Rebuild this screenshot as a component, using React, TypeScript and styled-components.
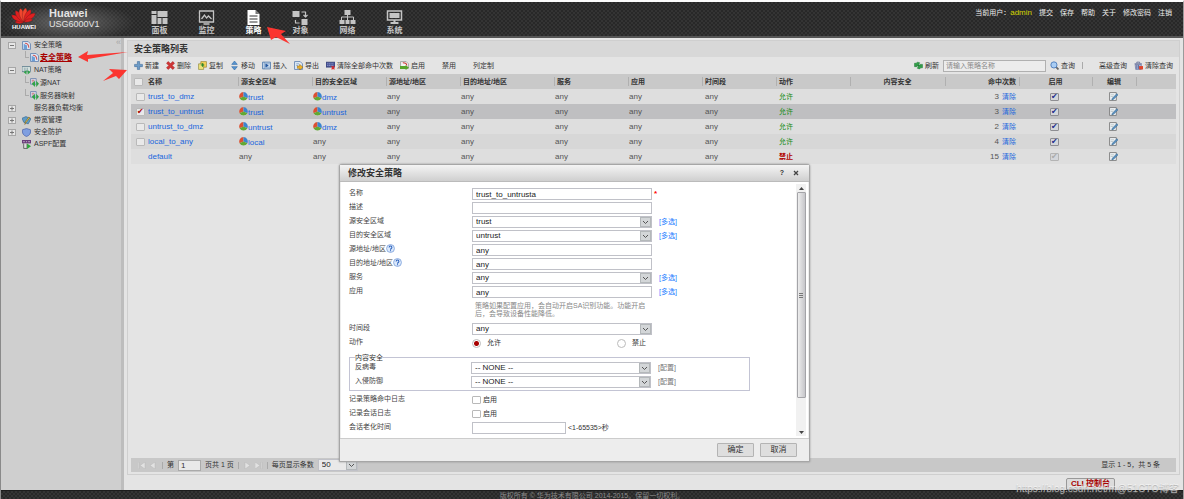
import React from "react";
import styled, { createGlobalStyle, css } from "styled-components";

const GlobalStyle = createGlobalStyle`
  * { box-sizing: border-box; }
  html, body { margin: 0; padding: 0; }
  body, input, select, button, table {
    font-family: "Liberation Sans", "Noto Sans CJK SC", Arial, sans-serif;
    font-size: 7px;
    line-height: 10px;
    color: #333;
  }
  a { text-decoration: none; color: inherit; }
  svg { display: block; flex: none; }
`;

/* ---------- frame ---------- */

const Page = styled.div`
  position: relative;
  display: flex;
  flex-direction: column;
  height: 100vh;
  overflow: hidden;
  border-top: 2px solid #fdfdfd;
  border-left: 1px solid #8a8a8a;
  border-right: 1px solid #9a9a9a;
  background: #e4e4e4;
`;

const mesh = css`
  background-color: #343434;
  background-image: radial-gradient(circle at 1px 1px, #282828 1px, transparent 1px),
    radial-gradient(circle at 3px 3px, #282828 1px, transparent 1px);
  background-size: 4px 4px;
`;

const Header = styled.header`
  ${mesh}
  display: flex;
  flex: none;
  height: 36px;
  border-bottom: 2px solid #555;
`;

const Brand = styled.div`
  display: flex;
  width: 135px;
  padding: 4px 0 0 10px;
  gap: 12px;
  background: radial-gradient(ellipse at 50% 60%, rgba(130, 130, 130, 0.7), rgba(90, 90, 90, 0) 70%);
`;

const LogoBox = styled.div`
  display: flex;
  flex-direction: column;
  align-items: center;
  width: 26px;
  font-size: 6px;
  line-height: 6px;
  font-weight: bold;
  color: #fff;
`;

const Product = styled.div`
  color: #e4e4e4;
  font-size: 9px;
  line-height: 11px;
  padding-top: 2px;
`;

const ProductName = styled.div`
  font-size: 11px;
  font-weight: bold;
`;

const Nav = styled.nav`
  display: flex;
  flex: 1;
`;

const NavItem = styled.a<{ $active?: boolean }>`
  display: flex;
  flex-direction: column;
  align-items: center;
  width: 47px;
  height: 34px;
  padding-top: 8px;
  gap: 1px;
  font-size: 8px;
  font-weight: bold;
  color: ${(p) => (p.$active ? "#fff" : "#c4c4c4")};
`;

const UserLinks = styled.div`
  display: flex;
  gap: 7px;
  padding: 6px 11px 0 0;
  color: #eee;
`;

const UserName = styled.span`
  color: #d4d400;
  font-size: 8px;
`;

const Body = styled.div`
  display: flex;
  flex: 1;
  min-height: 0;
`;

const Footer = styled.footer`
  ${mesh}
  flex: none;
  height: 9px;
  border-top: 1px solid #1c1c1c;
  overflow: hidden;
  text-align: center;
  color: #8c8c8c;
`;

/* ---------- tree ---------- */

const Sidebar = styled.aside`
  position: relative;
  flex: none;
  width: 123px;
  padding: 1px 0 0 7px;
  background: #cfcfcf;
  border-right: 3px solid #bdbdbd;
`;

const TreeRow = styled.div<{ $child?: boolean }>`
  display: flex;
  align-items: center;
  gap: ${(p) => (p.$child ? 1 : 0)}px;
  height: ${(p) => (p.$child ? 13 : 12)}px;
  padding-left: ${(p) => (p.$child ? 17 : 0)}px;
`;

const Toggle = styled.button`
  display: flex;
  align-items: center;
  justify-content: center;
  width: 8px;
  height: 7px;
  padding: 0;
  border: 1px solid #a6a6a6;
  background: #e6e6e6;
`;

const ToggleGap = styled.span`
  width: 8px;
`;

const TreeIcon = styled.span`
  width: 9px;
  margin: 0 3px 0 6px;
`;

const Branch = styled.span`
  width: 4px;
  height: 7px;
  margin-bottom: 6px;
  border-left: 1px solid #aaa;
  border-bottom: 1px solid #aaa;
`;

const TreeLink = styled.a<{ $active?: boolean }>`
  font-size: ${(p) => (p.$active ? 8 : 7)}px;
  ${(p) => p.$active && "color:#a80000;font-weight:bold;text-decoration:underline;"}
`;

const Collapse = styled.button`
  position: absolute;
  top: -1px;
  right: 0;
  padding: 0;
  border: 0;
  background: none;
  color: #a6a6a6;
  font-size: 9px;
`;

/* ---------- main panel ---------- */

const Main = styled.main`
  display: flex;
  flex: 1;
  flex-direction: column;
  min-width: 0;
  padding: 2px 3px 0 3px;
`;

const Panel = styled.section`
  display: flex;
  flex: 1;
  flex-direction: column;
  min-height: 0;
  border: 1px solid #cfcfcf;
  padding: 0 3px 2px;
`;

const PanelTitle = styled.h1`
  flex: none;
  height: 16px;
  margin: 0 -3px;
  padding: 0 6px;
  background: #d8d8d8;
  font-size: 9px;
  line-height: 16px;
  font-weight: bold;
`;

const Toolbar = styled.div`
  display: flex;
  flex: none;
  align-items: center;
  height: 17px;
  padding: 0 3px;
`;

const ToolButton = styled.button<{ $wide?: boolean }>`
  display: flex;
  align-items: center;
  gap: 2px;
  margin: 0 ${(p) => (p.$wide ? 17 : 7)}px 0 0;
  padding: 0;
  border: 0;
  background: none;
  white-space: nowrap;
  &:last-child { margin-right: 0; }
`;

const Push = styled.span`
  flex: 1;
`;

const SearchBox = styled.input`
  width: 103px;
  height: 12px;
  margin: 0 4px 0 -3px;
  padding: 0 2px;
  border: 1px solid #b0b0b0;
  background: #ececec;
  &::placeholder { color: #888; }
`;

const Bar = styled.span<{ $space?: number }>`
  width: 1px;
  height: 7px;
  margin: 0 ${(p) => p.$space ?? 0}px 0 0;
  background: #aaa;
`;

const Table = styled.table`
  width: 100%;
  flex: none;
  table-layout: fixed;
  border-collapse: collapse;
  white-space: nowrap;
`;

type Align = "left" | "center" | "right";

const Th = styled.th<{ $align?: Align; $bar?: boolean }>`
  height: 15px;
  padding: 0 3px 0 2px;
  background: #c9c9c9
    ${(p) => (p.$bar ? "linear-gradient(#b0b0b0, #b0b0b0) left center / 1px 9px no-repeat" : "")};
  text-align: ${(p) => p.$align ?? "left"};
  padding-left: ${(p) => (p.$bar ? 3 : 2)}px;
`;

const Td = styled.td<{ $align?: Align; $pad?: number }>`
  height: 15px;
  padding: 0 3px 0 ${(p) => p.$pad ?? 1}px;
  font-size: 8px;
  color: #555;
  text-align: ${(p) => p.$align ?? "left"};
`;

const Tr = styled.tr<{ $tone: string }>`
  background: ${(p) => p.$tone};
`;

const Zone = styled.span`
  display: flex;
  align-items: center;
`;

const Link = styled.a<{ $low?: boolean }>`
  color: #1a66dd;
  font-size: 8px;
  ${(p) => p.$low && "padding-top:3px;"}
`;

const SmallLink = styled(Link)`
  font-size: 7px;
  margin-left: 3px;
`;

const Verdict = styled.span<{ $deny?: boolean }>`
  font-size: 7px;
  font-weight: ${(p) => (p.$deny ? "bold" : "normal")};
  color: ${(p) => (p.$deny ? "#b00000" : "#128a12")};
`;

const Tick = styled.input<{ $color?: string; $fill?: string }>`
  appearance: none;
  display: block;
  flex: none;
  width: 9px;
  height: 8px;
  margin: 0;
  border: 1px solid #b9b9b9;
  border-radius: 1px;
  background: ${(p) => p.$fill ?? "#e9e9e9"};
  &:checked::after {
    content: "✔";
    display: block;
    font: 8px/6px "DejaVu Sans", sans-serif;
    color: ${(p) => p.$color ?? "#a80000"};
  }
`;

const EnableTick = styled(Tick)`
  border-color: #8e8e92;
  background: #d4d6da;
  &:disabled { border-color: #b4b4b4; }
`;

const Middle = styled.span`
  display: flex;
  justify-content: center;
`;

const IconButton = styled.button`
  padding: 0;
  border: 0;
  background: none;
`;

const Pager = styled.div`
  display: flex;
  flex: none;
  align-items: center;
  gap: 4px;
  height: 14px;
  padding: 0 16px 0 7px;
  background: #c8c8c8;
`;

const PageInput = styled.input`
  width: 23px;
  height: 11px;
  padding: 0 2px;
  border: 1px solid #aaa;
  background: #e9e9e9;
  font-size: 8px;
`;

const PageArrow = styled.button`
  width: 8px;
  padding: 0;
  border: 0;
  background: none;
`;

const Dock = styled.div`
  display: flex;
  flex: none;
  justify-content: flex-end;
  height: 15px;
  padding: 3px 65px 0 0;
`;

const CliButton = styled.button`
  width: 49px;
  height: 12px;
  padding: 0;
  border: 1px solid #999;
  border-radius: 2px 2px 0 0;
  background: #dcdcdc;
  color: #a80000;
  font-size: 8px;
  font-weight: bold;
`;

/* ---------- dialog ---------- */

const Dialog = styled.section`
  position: absolute;
  left: 338px;
  top: 162px;
  width: 471px;
  border: 1px solid #a6a6a6;
  border-radius: 3px 3px 0 0;
  background: #ededed;
  box-shadow: 0 0 2px #888;
`;

const DialogHead = styled.div`
  display: flex;
  align-items: center;
  height: 17px;
  padding: 0 10px 0 8px;
  gap: 9px;
  border-bottom: 1px solid #bbb;
  background: linear-gradient(#f4f4f4, #cfcfcf);
`;

const DialogTitle = styled.h2`
  flex: 1;
  margin: 0;
  font-size: 9px;
  line-height: 12px;
`;

const DialogMain = styled.div`
  display: flex;
  margin: 0 1px;
  background: #fff;
`;

const Form = styled.form`
  flex: 1;
  height: 256px;
  padding: 5px 0 0 8px;
`;

const Row = styled.div`
  display: flex;
  align-items: center;
  height: 14px;
`;

const Label = styled.label<{ $inset?: boolean }>`
  display: flex;
  align-items: center;
  width: ${(p) => (p.$inset ? 116 : 123)}px;
  padding-bottom: 3px;
  color: #444;
`;

const field = css`
  height: 12px;
  padding: 0 3px;
  border: 1px solid #c0c1c8;
  border-radius: 0;
  background: #fff;
  font-size: 8px;
  color: #222;
`;

const Field = styled.input<{ $short?: boolean }>`
  ${field}
  width: ${(p) => (p.$short ? 94 : 180)}px;
`;

const SelectWrap = styled.span<{ $w: number }>`
  position: relative;
  display: block;
  width: ${(p) => p.$w}px;
  height: 12px;
`;

const SelectBox = styled.select<{ $gray?: boolean }>`
  ${field}
  display: block;
  appearance: none;
  width: 100%;
  background: ${(p) => (p.$gray ? "#e9e9e9" : "#fff")};
`;

const SelectArrow = styled.span`
  position: absolute;
  top: 1px;
  right: 1px;
  display: flex;
  align-items: center;
  justify-content: center;
  width: 11px;
  height: 10px;
  border: 1px solid #b4b8ba;
  background: #d3d6d8;
  pointer-events: none;
`;

const FieldLink = styled.a<{ $off?: boolean }>`
  margin-left: 7px;
  color: ${(p) => (p.$off ? "#777" : "#1a7cff")};
`;

const Required = styled.span`
  margin-left: 2px;
  color: #f00;
  font-size: 8px;
  font-weight: bold;
`;

const Hint = styled.p`
  width: 183px;
  height: 23px;
  margin: 0 0 0 123px;
  padding: 3px 0 0 3px;
  line-height: 8px;
  color: #888;
`;

const Choice = styled.label<{ $w?: number }>`
  display: flex;
  align-items: center;
  gap: 6px;
  width: ${(p) => p.$w ?? 40}px;
`;

const Radio = styled.input`
  appearance: none;
  width: 9px;
  height: 9px;
  margin: 0;
  border: 1px solid #bbb;
  border-radius: 50%;
  background: #fff;
  &:checked { background: radial-gradient(circle, #a80000 0 2px, #fff 3px); }
`;

const CheckLabel = styled.label`
  display: flex;
  align-items: center;
  gap: 2px;
`;

const Group = styled.fieldset`
  width: 401px;
  min-width: 0;
  margin: 4px 0 2px;
  padding: 0 0 1px 5px;
  border: 1px solid #c3c4d4;
`;

const Legend = styled.legend`
  padding: 0;
  line-height: 7px;
`;

const ScrollTrack = styled.div`
  display: flex;
  flex-direction: column;
  align-items: center;
  width: 10px;
  margin: 2px 2px 2px 0;
  background: #f1f1f1;
`;

const ScrollThumb = styled.div`
  display: flex;
  align-items: center;
  justify-content: center;
  width: 9px;
  height: 206px;
  border: 1px solid #a4a4a8;
  border-radius: 1px;
  background: linear-gradient(90deg, #ededed, #c6c6ca);
`;

const ScrollEnd = styled.div<{ $last?: boolean }>`
  display: flex;
  align-items: center;
  height: 8px;
  ${(p) => p.$last && "margin-top:auto;"}
`;

const DialogFoot = styled.div`
  display: flex;
  align-items: center;
  justify-content: flex-end;
  gap: 6px;
  height: 23px;
  padding-right: 12px;
  border-top: 1px solid #ccc;
`;

const FootButton = styled.button`
  width: 37px;
  height: 14px;
  padding: 0;
  border: 1px solid #b4b4b4;
  border-radius: 1px;
  background: #dedede;
  font-size: 8px;
`;

/* ---------- overlays ---------- */

const Marks = styled.svg`
  position: absolute;
  left: -1px;
  top: -2px;
  pointer-events: none;
`;

const Watermark = styled.div`
  position: absolute;
  right: 4px;
  bottom: 4px;
  display: flex;
  font-size: 10px;
  line-height: 12px;
  color: rgba(255, 255, 255, 0.6);
  text-shadow: 0 1px 1px rgba(110, 110, 110, 0.5);
  pointer-events: none;
`;

/* ---------- drawings ---------- */

const Logo = () => (
  <svg width="26" height="18" viewBox="0 0 26 18">
    {[-82, -57, -33, -11, 11, 33, 57, 82].map((a, i) => (
      <path
        key={a}
        d={Math.abs(a) > 80 ? "M13 16C10 13 10 9 12 7C14 9 14 13 13 16Z" : "M13 16C9 11 9 4 12 2C15 4 15 11 13 16Z"}
        transform={`rotate(${a} 13 16)`}
        fill={i === 3 || i === 4 ? "#f0452e" : "#df2020"}
        stroke="#5a1a1a"
        strokeWidth="0.3"
      />
    ))}
  </svg>
);

const navArt: Record<string, React.ReactNode> = {
  panel: <path d="M0 1h5v3H0zM0 5h5v9H0zM6 1h10v6H6zM6 8h4v6H6zM11 8h5v6h-5z" />,
  monitor: (
    <g fill="none" stroke="currentColor" strokeWidth="1.3">
      <path d="M1 1h14v11H1zM5 14h6M3 9l3-4 2 3 2-2 3 3" />
    </g>
  ),
  policy: (
    <>
      <path d="M2 0h8l4 4v11H2z" />
      <path d="M4 6h8M4 9h8M4 12h8" stroke="#333" strokeWidth="1" />
      <path d="M10 0l4 4h-4z" fill="#777" />
    </>
  ),
  object: (
    <>
      <path d="M0 1h7v6H0zM9 9h6v6H9z" />
      <path d="M9 2h4v4M11 5l2 2 2-2M7 13H3v-3" fill="none" stroke="currentColor" strokeWidth="1.2" />
    </>
  ),
  network: (
    <>
      <path d="M5 0h6v5H5zM0 10h5v4H0zM6 10h4v4H6zM11 10h5v4h-5z" />
      <path d="M8 5v5M2 10V7h12v3" fill="none" stroke="currentColor" />
    </>
  ),
  system: (
    <>
      <path d="M1 1h14v9H1z" fill="none" stroke="currentColor" strokeWidth="1.5" />
      <path d="M3 3h10v5H3zM7 10h2v2H7zM4 12h8v2H4z" />
    </>
  ),
};

const NavIcon = ({ name }: { name: string }) => (
  <svg width="17" height="15" viewBox="0 0 16 15" fill="currentColor">
    {navArt[name]}
  </svg>
);

const sheet = <path d="M1 1h10l4 4v10H1z" fill="#e3edf9" stroke="#5c7fae" strokeWidth="1.5" />;

const art: Record<string, React.ReactNode> = {
  add: <path d="M6 1h4v5h5v4h-5v5H6v-5H1V6h5z" fill="#6d9cc8" stroke="#3b6a9a" />,
  remove: <path d="M4 1l4 4 4-4 3 3-4 4 4 4-3 3-4-4-4 4-3-3 4-4-4-4z" fill="#cf3636" stroke="#a11" />,
  copy: (
    <>
      <path d="M5 1h10v10H5z" fill="#f3d25a" stroke="#8a7420" />
      <path d="M1 5h9v10H1z" fill="#eee27c" stroke="#7e7a26" />
      <path d="M5 7h6M8 4v6" stroke="#2b8a2b" strokeWidth="2" />
    </>
  ),
  move: <path d="M8 0l5 6H3zM8 16l5-6H3z" fill="#5793cf" stroke="#2d68a6" />,
  insert: (
    <>
      <path d="M1 2h14v12H1z" fill="#d8e6f5" stroke="#4a76a8" strokeWidth="1.5" />
      <path d="M4 2v12M7 5h7M7 11h7" stroke="#4a76a8" />
      <path d="M6 4l6 4-6 4z" fill="#2458a0" />
    </>
  ),
  export: (
    <>
      {sheet}
      <path d="M4 5h5M4 8h3" stroke="#4a76a8" />
      <path d="M6 9h4V6l6 5-6 5v-3H6z" fill="#f1b52c" stroke="#96690c" />
    </>
  ),
  wipe: (
    <>
      <path d="M0 2h16v9H0z" fill="#4a5596" stroke="#2a3468" />
      <path d="M2 5h12M2 8h12" stroke="#bcc5f0" strokeDasharray="2 1" />
      <path d="M10 9l5 6M15 9l-5 6" stroke="#d22" strokeWidth="2" />
    </>
  ),
  enable: (
    <>
      <path d="M1 1h10l4 4v8H1z" fill="#f4f4f4" stroke="#777" />
      <path d="M5 3c5 0 7 2 7 5" fill="none" stroke="#c33" strokeWidth="2" />
      <path d="M0 9h10v-2l6 5-6 4v-2H0z" fill="#58a52c" />
    </>
  ),
  refresh: (
    <path
      d="M1 10V4h3l2-2 4 1-2 4v2H6L5 7v3zM15 6v6h-3l-2 2-4-1 2-4V7h2l1 2V6z"
      fill="#33a04a"
      stroke="#1c7a33"
    />
  ),
  search: (
    <>
      <path d="M10 10l5 5" stroke="#666" strokeWidth="3" />
      <circle cx="7" cy="7" r="5.5" fill="#a9cdf4" stroke="#4576b5" strokeWidth="1.5" />
    </>
  ),
  clear: (
    <>
      <path d="M2 6h11v9H3z" fill="#a8b4da" stroke="#5b6693" />
      <path d="M1 5h13M5 4V2h5v2M5 7v7M8 7v7" fill="none" stroke="#5b6693" strokeWidth="1.5" />
      <path d="M9 9h7v6H9z" fill="#e0452c" />
    </>
  ),
  policy: (
    <>
      {sheet}
      <path d="M5 4c5 0 7 3 7 8" fill="none" stroke="#cf5a5a" strokeWidth="2" />
      <path d="M3 5l6 3v6H3z" fill="#6d9fd6" />
    </>
  ),
  nat: (
    <>
      <path d="M0 1h15v9H0z" fill="#dfe9e4" stroke="#5b7c8c" strokeWidth="1.5" />
      <path d="M4 3v6M7 3v6M10 3v6" stroke="#5b7c8c" />
      <path d="M8 7l-5 4 5 4zM10 7l5 4-5 4z" fill="#30a248" />
    </>
  ),
  natChild: (
    <>
      <path d="M1 1h10v10H1z" fill="#dbe4f3" stroke="#6c83ad" strokeWidth="1.5" />
      <path d="M3 4h5M3 7h4" stroke="#c25f5f" strokeWidth="1.5" />
      <path d="M9 5l-6 5 6 6zM11 5l5 5-5 6z" fill="#30a248" />
    </>
  ),
  bandwidth: (
    <>
      <path d="M0 4l7-3 9 4-5 9-8-3z" fill="#5d9cc9" stroke="#2e5f88" />
      <path d="M14 3L7 12l-2 3 1-5 6-8z" fill="#f0cd4f" stroke="#73571a" />
    </>
  ),
  shield: <path d="M8 1l7 2c1 6-1 10-7 12C2 13 0 9 1 3z" fill="#7f9fe0" stroke="#4a62a8" strokeWidth="1.3" />,
  aspf: (
    <>
      <path d="M0 0h16v6H0z" fill="#6a3d7a" />
      <path d="M2 3h3M7 3h2M11 3h3" stroke="#fff" />
      <path d="M3 6v9h6V7" fill="#ddd" stroke="#555" strokeWidth="1.5" />
      <path d="M9 6l7 5-7 5z" fill="#2fa53a" />
    </>
  ),
  pie: (
    <>
      <circle cx="8" cy="8" r="7.5" fill="#ddd" />
      <path d="M8 8V0A8 8 0 0 0 1 11z" fill="#dc5032" />
      <path d="M8 8V0a8 8 0 0 1 7 11z" fill="#3c84cf" />
      <path d="M8 8l7 3a8 8 0 0 1-14 0z" fill="#62a833" />
    </>
  ),
  edit: (
    <>
      <path d="M1 1h12v14H1z" fill="#f0f3f6" stroke="#777" strokeWidth="1.5" />
      <path d="M3 5h6M3 8h4" stroke="#9aa" />
      <path d="M14 3l2 2-8 8-3 1 1-3z" fill="#5a93c4" stroke="#2e5f88" />
    </>
  ),
  help: (
    <>
      <circle cx="8" cy="8" r="7" fill="#dce9fb" stroke="#7fa3dc" strokeWidth="1.5" />
      <path d="M5.5 6c0-3 5-3 5 0 0 2-2.500 2-2.500 4M8 11v2" fill="none" stroke="#2c62bd" strokeWidth="1.8" />
    </>
  ),
};

const Icon = ({ name, size = 9 }: { name: string; size?: number }) => (
  <svg width={size} height={size} viewBox="0 0 16 16">
    {art[name]}
  </svg>
);

const Chevron = () => (
  <svg width="7" height="5" viewBox="0 0 7 5" fill="none" stroke="#555">
    <path d="M1 1l2.500 2.500L6 1" />
  </svg>
);

const PagerArt = ({ d }: { d: string }) => (
  <svg width="8" height="7" viewBox="0 0 8 7" fill="#e2e2e2" stroke="#b4b4b4" strokeWidth="0.4">
    <path d={d} />
  </svg>
);

/* ---------- data ---------- */

const navItems = [
  ["panel", "面板"],
  ["monitor", "监控"],
  ["policy", "策略"],
  ["object", "对象"],
  ["network", "网络"],
  ["system", "系统"],
];

const tree = [
  { t: "安全策略", icon: "policy", open: true },
  { t: "安全策略", icon: "policy", child: true, active: true },
  { t: "NAT策略", icon: "nat", open: true },
  { t: "源NAT", icon: "natChild", child: true },
  { t: "服务器映射", icon: "natChild", child: true },
  { t: "服务器负载均衡", open: false },
  { t: "带宽管理", icon: "bandwidth", open: false },
  { t: "安全防护", icon: "shield", open: false },
  { t: "ASPF配置", icon: "aspf" },
];

const tools = [
  ["add", "新建"],
  ["remove", "删除"],
  ["copy", "复制"],
  ["move", "移动"],
  ["insert", "插入"],
  ["export", "导出"],
  ["wipe", "清除全部命中次数"],
  ["enable", "启用"],
  ["", "禁用"],
  ["", "列定制"],
];

const widths = [15, 92, 74, 74, 74, 94, 74, 74, 74, 74, 95, 74, 73, 44];

const heads: [string, Align?][] = [
  ["源安全区域"],
  ["目的安全区域"],
  ["源地址/地区"],
  ["目的地址/地区"],
  ["服务"],
  ["应用"],
  ["时间段"],
  ["动作"],
  ["内容安全", "center"],
  ["命中次数", "right"],
  ["启用", "center"],
  ["编辑", "center"],
];

const policies = [
  { name: "trust_to_dmz", src: "trust", dst: "dmz", hits: 3, tone: "#dedede" },
  { name: "trust_to_untrust", src: "trust", dst: "untrust", hits: 3, tone: "#bfbfc1", picked: true },
  { name: "untrust_to_dmz", src: "untrust", dst: "dmz", hits: 2, tone: "#dedede" },
  { name: "local_to_any", src: "local", dst: "any", hits: 4, tone: "#d7d7d7" },
  { name: "default", src: "any", dst: "any", hits: 15, tone: "#dedede", fixed: true },
];

const ZoneCell = ({ zone }: { zone: string }) =>
  zone === "any" ? (
    <>any</>
  ) : (
    <Zone>
      <Icon name="pie" />
      <Link href="#" $low>{zone}</Link>
    </Zone>
  );

const Dropdown = ({ id, value, w = 180, gray }: { id: string; value: string; w?: number; gray?: boolean }) => (
  <SelectWrap $w={w}>
    <SelectBox id={id} defaultValue={value} $gray={gray}>
      <option>{value}</option>
    </SelectBox>
    <SelectArrow><Chevron /></SelectArrow>
  </SelectWrap>
);

const formRows = [
  { id: "name", label: "名称", value: "trust_to_untrusta", required: true },
  { id: "desc", label: "描述", value: "" },
  { id: "src", label: "源安全区域", value: "trust", select: true, multi: true },
  { id: "dst", label: "目的安全区域", value: "untrust", select: true, multi: true },
  { id: "srcAddr", label: "源地址/地区", value: "any", help: true },
  { id: "dstAddr", label: "目的地址/地区", value: "any", help: true },
  { id: "service", label: "服务", value: "any", select: true, multi: true },
  { id: "app", label: "应用", value: "any", multi: true },
];

const EditDialog = () => (
  <Dialog role="dialog" aria-labelledby="dialog-title">
    <DialogHead>
      <DialogTitle id="dialog-title">修改安全策略</DialogTitle>
      <IconButton aria-label="help"><b>?</b></IconButton>
      <IconButton aria-label="close">
        <svg width="6" height="6" viewBox="0 0 6 6" stroke="#444" strokeWidth="1.3">
          <path d="M1 1l4 4M5 1L1 5" />
        </svg>
      </IconButton>
    </DialogHead>
    <DialogMain>
      <Form>
        {formRows.map((r) => (
          <Row key={r.id}>
            <Label htmlFor={r.id}>
              {r.label}
              {r.help && <Icon name="help" />}
            </Label>
            {r.select ? <Dropdown id={r.id} value={r.value} /> : <Field id={r.id} defaultValue={r.value} />}
            {r.required && <Required>*</Required>}
            {r.multi && <FieldLink href="#">[多选]</FieldLink>}
          </Row>
        ))}
        <Hint>策略如果配置应用，会自动开启SA识别功能。功能开启后，会导致设备性能降低。</Hint>
        <Row>
          <Label htmlFor="time">时间段</Label>
          <Dropdown id="time" value="any" />
        </Row>
        <Row>
          <Label as="span">动作</Label>
          <Choice $w={145}>
            <Radio type="radio" name="action" defaultChecked />
            允许
          </Choice>
          <Choice>
            <Radio type="radio" name="action" />
            禁止
          </Choice>
        </Row>
        <Group>
          <Legend>内容安全</Legend>
          <Row>
            <Label $inset htmlFor="av">反病毒</Label>
            <Dropdown id="av" value="-- NONE --" />
            <FieldLink href="#" $off>[配置]</FieldLink>
          </Row>
          <Row>
            <Label $inset htmlFor="ips">入侵防御</Label>
            <Dropdown id="ips" value="-- NONE --" />
            <FieldLink href="#" $off>[配置]</FieldLink>
          </Row>
        </Group>
        <Row>
          <Label as="span">记录策略命中日志</Label>
          <CheckLabel><Tick type="checkbox" $fill="#fff" />启用</CheckLabel>
        </Row>
        <Row>
          <Label as="span">记录会话日志</Label>
          <CheckLabel><Tick type="checkbox" $fill="#fff" />启用</CheckLabel>
        </Row>
        <Row>
          <Label htmlFor="aging">会话老化时间</Label>
          <Field id="aging" $short />
          <CheckLabel htmlFor="aging">&nbsp;&lt;1-65535&gt;秒</CheckLabel>
        </Row>
      </Form>
      <ScrollTrack>
        <ScrollEnd>
          <svg width="5" height="3" viewBox="0 0 5 3"><path d="M0 3l2.500-3L5 3z" fill="#444" /></svg>
        </ScrollEnd>
        <ScrollThumb>
          <svg width="4" height="5" viewBox="0 0 4 5" stroke="#777"><path d="M0 .5h4M0 2.500h4M0 4.500h4" /></svg>
        </ScrollThumb>
        <ScrollEnd $last>
          <svg width="5" height="3" viewBox="0 0 5 3"><path d="M0 0l2.500 3L5 0z" fill="#444" /></svg>
        </ScrollEnd>
      </ScrollTrack>
    </DialogMain>
    <DialogFoot>
      <FootButton>确定</FootButton>
      <FootButton>取消</FootButton>
    </DialogFoot>
  </Dialog>
);

export default function App() {
  return (
    <Page>
      <GlobalStyle />
      <Header>
        <Brand>
          <LogoBox>
            <Logo />
            HUAWEI
          </LogoBox>
          <Product>
            <ProductName>Huawei</ProductName>
            USG6000V1
          </Product>
        </Brand>
        <Nav>
          {navItems.map(([icon, label]) => (
            <NavItem key={icon} href="#" $active={icon === "policy"}>
              <NavIcon name={icon} />
              {label}
            </NavItem>
          ))}
        </Nav>
        <UserLinks>
          <span>当前用户：<UserName>admin</UserName></span>
          {["提交", "保存", "帮助", "关于", "修改密码", "注销"].map((t) => (
            <a key={t} href="#">{t}</a>
          ))}
        </UserLinks>
      </Header>

      <Body>
        <Sidebar>
          <Collapse aria-label="collapse">«</Collapse>
          {tree.map((n, i) => (
            <TreeRow key={i} $child={n.child}>
              {n.child ? (
                <Branch />
              ) : n.open === undefined ? (
                <ToggleGap />
              ) : (
                <Toggle aria-label={n.t}>
                  <svg width="4" height="5" viewBox="0 0 4 5" stroke="#777">
                    <path d={n.open ? "M0 2.500h4" : "M0 2.500h4M2 .5v4"} />
                  </svg>
                </Toggle>
              )}
              {n.child ? <Icon name={n.icon!} /> : <TreeIcon>{n.icon && <Icon name={n.icon} />}</TreeIcon>}
              <TreeLink href="#" $active={n.active}>{n.t}</TreeLink>
            </TreeRow>
          ))}
        </Sidebar>

        <Main>
          <Panel>
            <PanelTitle>安全策略列表</PanelTitle>
            <Toolbar>
              {tools.map(([icon, label]) => (
                <ToolButton key={label} $wide={!icon || icon === "enable"}>
                  {icon && <Icon name={icon} />}
                  {label}
                </ToolButton>
              ))}
              <Push />
              <ToolButton><Icon name="refresh" />刷新</ToolButton>
              <SearchBox placeholder="请输入策略名称" aria-label="策略名称" />
              <ToolButton><Icon name="search" />查询</ToolButton>
              <Bar $space={16} />
              <ToolButton>高级查询</ToolButton>
              <ToolButton><Icon name="clear" />清除查询</ToolButton>
            </Toolbar>
            <Table>
              <colgroup>
                {widths.map((w, i) => <col key={i} width={w} />)}
                <col />
              </colgroup>
              <thead>
                <tr>
                  <Th><Middle><Tick type="checkbox" aria-label="全选" /></Middle></Th>
                  <Th>名称</Th>
                  {heads.map(([t, a]) => <Th key={t} $align={a} $bar>{t}</Th>)}
                  <Th $bar />
                </tr>
              </thead>
              <tbody>
                {policies.map((p) => (
                  <Tr key={p.name} $tone={p.tone}>
                    <Td $pad={5}>
                      {!p.fixed && <Tick type="checkbox" defaultChecked={p.picked} aria-label={p.name} />}
                    </Td>
                    <Td $pad={2}><Link href="#">{p.name}</Link></Td>
                    <Td><ZoneCell zone={p.src} /></Td>
                    <Td><ZoneCell zone={p.dst} /></Td>
                    <Td>any</Td>
                    <Td>any</Td>
                    <Td>any</Td>
                    <Td>any</Td>
                    <Td $pad={3}>any</Td>
                    <Td $pad={3}><Verdict $deny={p.fixed}>{p.fixed ? "禁止" : "允许"}</Verdict></Td>
                    <Td />
                    <Td $align="right">{p.hits}<SmallLink href="#">清除</SmallLink></Td>
                    <Td>
                      <Middle>
                        <EnableTick
                          type="checkbox"
                          defaultChecked
                          disabled={p.fixed}
                          $color={p.fixed ? "#aaa" : "#1c2e8c"}
                          aria-label="启用"
                        />
                      </Middle>
                    </Td>
                    <Td><Middle><IconButton aria-label="编辑"><Icon name="edit" /></IconButton></Middle></Td>
                    <Td />
                  </Tr>
                ))}
              </tbody>
            </Table>
            <Push />
            <Pager>
              <PageArrow aria-label="first"><PagerArt d="M0 0h1v7H0zM7 0v7L2 3.500z" /></PageArrow>
              <PageArrow aria-label="previous"><PagerArt d="M5 0v7L0 3.500z" /></PageArrow>
              <Bar />
              <label htmlFor="page">第</label>
              <PageInput id="page" defaultValue="1" />
              <span>页共 1 页</span>
              <Bar />
              <PageArrow aria-label="next"><PagerArt d="M2 0v7l5-3.500z" /></PageArrow>
              <PageArrow aria-label="last"><PagerArt d="M0 0v7l5-3.500zM6 0h1v7H6z" /></PageArrow>
              <Bar />
              <label htmlFor="size">每页显示条数</label>
              <Dropdown id="size" value="50" w={40} gray />
              <Push />
              <span>显示 1 - 5，共 5 条</span>
            </Pager>
          </Panel>
          <Dock>
            <CliButton>CLI 控制台</CliButton>
          </Dock>
        </Main>
      </Body>

      <Footer>版权所有 © 华为技术有限公司 2014-2015。保留一切权利。</Footer>

      <EditDialog />

      <Marks width="300" height="90" viewBox="0 0 300 90" fill="#fb3530">
        <path d="M267 27L286 31L281 34L290 44L276 37L271 40Z" />
        <path d="M78 57L88 51L87 55L128 52L88 59L88 62Z" />
        <path d="M127 70L109 69L113 73L103 81L116 76L119 79Z" />
      </Marks>
      <Watermark>
        <span>https://blog.csdn.net/m</span>
        <span>@51CTO博客</span>
      </Watermark>
    </Page>
  );
}
